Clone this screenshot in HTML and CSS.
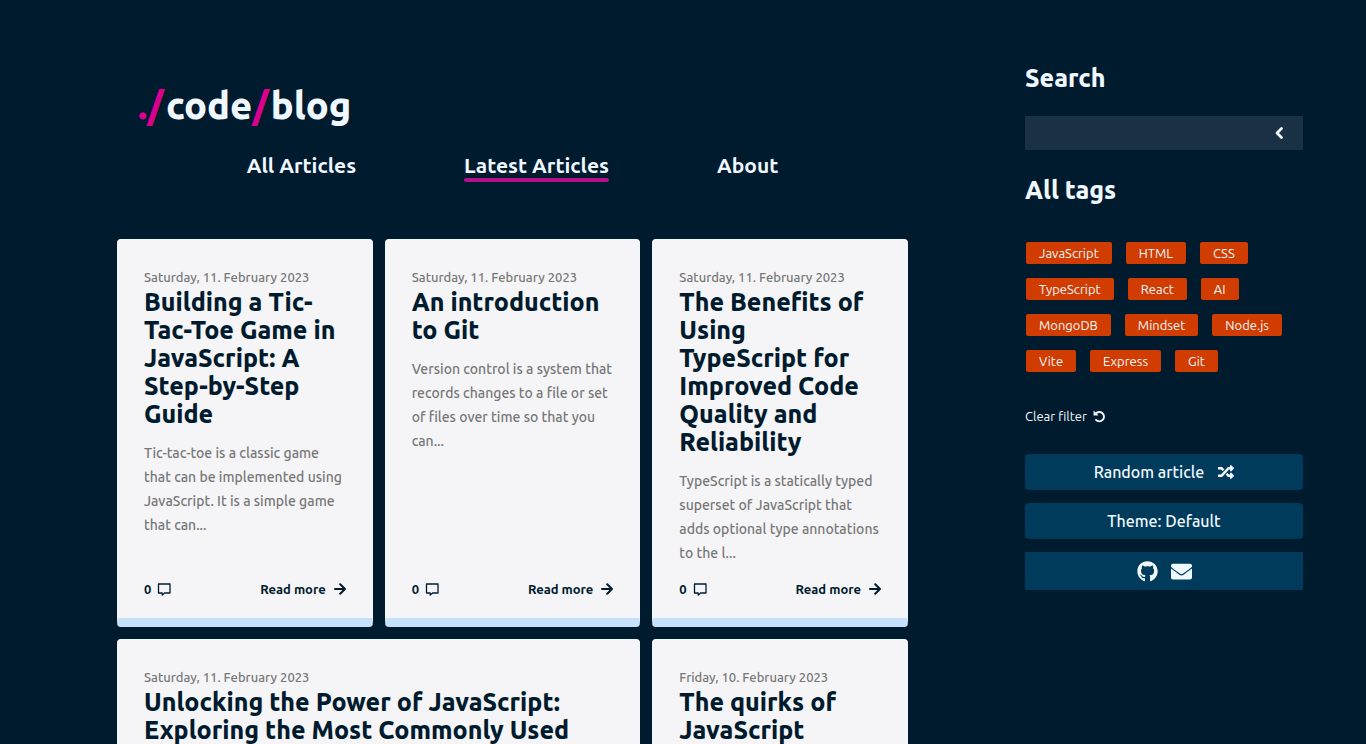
FILE: index.html
```html
<!DOCTYPE html>
<html lang="en">
<head>
<meta charset="utf-8">
<meta name="viewport" content="width=device-width, initial-scale=1">
<title>./code/blog</title>
<link rel="stylesheet" href="styles.css">
</head>
<body>
<svg class="sprite" aria-hidden="true">
  <symbol id="comment" viewBox="0 0 14 13"><path d="M1.500 1h11.500v9H7.600L5.200 12V10H1.500z" fill="none" stroke="currentColor" stroke-width="1.300" stroke-linejoin="round"/></symbol>
  <symbol id="arrow" viewBox="0 0 12 12"><path d="M1 6h10M6.200 1.200 11 6l-4.800 4.800" fill="none" stroke="currentColor" stroke-width="2" stroke-linecap="round" stroke-linejoin="round"/></symbol>
</svg>
<div class="page">
  <main class="main">
    <header class="header">
      <a class="logo" href="#"><span class="accent">./</span>code<span class="accent">/</span>blog</a>
      <nav class="nav">
        <a href="#">All Articles</a>
        <a class="active" href="#">Latest Articles</a>
        <a href="#">About</a>
      </nav>
    </header>
    <section class="cards">
      <article class="card">
        <time class="date">Saturday, 11. February 2023</time>
        <h2 class="title">Building a Tic-Tac-Toe Game in JavaScript: A Step-by-Step Guide</h2>
        <p class="summary">Tic-tac-toe is a classic game that can be implemented using JavaScript. It is a simple game that can...</p>
        <footer class="card-footer"><span class="comments">0 <svg class="i-comment"><use href="#comment"/></svg></span><a class="more" href="#">Read more <svg class="i-arrow"><use href="#arrow"/></svg></a></footer>
      </article>
      <article class="card">
        <time class="date">Saturday, 11. February 2023</time>
        <h2 class="title">An introduction to Git</h2>
        <p class="summary">Version control is a system that records changes to a file or set of files over time so that you can...</p>
        <footer class="card-footer"><span class="comments">0 <svg class="i-comment"><use href="#comment"/></svg></span><a class="more" href="#">Read more <svg class="i-arrow"><use href="#arrow"/></svg></a></footer>
      </article>
      <article class="card">
        <time class="date">Saturday, 11. February 2023</time>
        <h2 class="title">The Benefits of Using TypeScript for Improved Code Quality and Reliability</h2>
        <p class="summary">TypeScript is a statically typed superset of JavaScript that adds optional type annotations to the l...</p>
        <footer class="card-footer"><span class="comments">0 <svg class="i-comment"><use href="#comment"/></svg></span><a class="more" href="#">Read more <svg class="i-arrow"><use href="#arrow"/></svg></a></footer>
      </article>
      <article class="card wide">
        <time class="date">Saturday, 11. February 2023</time>
        <h2 class="title">Unlocking the Power of JavaScript: Exploring the Most Commonly Used</h2>
      </article>
      <article class="card">
        <time class="date">Friday, 10. February 2023</time>
        <h2 class="title">The quirks of JavaScript</h2>
      </article>
    </section>
  </main>
  <aside class="sidebar">
    <h2 class="heading"><label for="search">Search</label></h2>
    <form class="search">
      <input id="search" type="text">
      <button class="search-button" type="button" aria-label="Toggle search"><svg viewBox="0 0 10 14"><path d="M7.500 2.500 3 7l4.500 4.500" fill="none" stroke="currentColor" stroke-width="2.800" stroke-linecap="round" stroke-linejoin="round"/></svg></button>
    </form>
    <h2 class="heading">All tags</h2>
    <div class="tags">
      <button class="tag">JavaScript</button><button class="tag">HTML</button><button class="tag">CSS</button>
      <button class="tag">TypeScript</button><button class="tag">React</button><button class="tag">AI</button>
      <button class="tag">MongoDB</button><button class="tag">Mindset</button><button class="tag">Node.js</button>
      <button class="tag">Vite</button><button class="tag">Express</button><button class="tag">Git</button>
    </div>
    <button class="clear">Clear filter <svg viewBox="0 0 14 14"><path d="M3 4A5 5 0 1 1 3.200 10.600" fill="none" stroke="currentColor" stroke-width="2" stroke-linecap="round"/><path d="M.6.600v5.400H6z" fill="currentColor"/></svg></button>
    <div class="actions">
      <button class="action">Random article <svg class="i-shuffle" viewBox="0 0 512 512"><path fill="currentColor" d="M504.971 359.029c9.373 9.373 9.373 24.569 0 33.941l-80 79.984c-15.010 15.010-40.971 4.490-40.971-16.971V416h-58.785a12.004 12.004 0 0 1-8.773-3.812l-70.556-75.596 53.333-57.143L352 336h32v-39.981c0-21.438 25.943-31.998 40.971-16.971l80 79.981zM12 176h84l52.781 56.551 53.333-57.143-70.556-75.596A11.999 11.999 0 0 0 122.785 96H12c-6.627 0-12 5.373-12 12v56c0 6.627 5.373 12 12 12zm372 0v39.984c0 21.460 25.961 31.980 40.971 16.971l80-79.984c9.373-9.373 9.373-24.569 0-33.941l-80-79.981C409.943 24.021 384 34.582 384 56.019V96h-58.785a12.004 12.004 0 0 0-8.773 3.812L96 336H12c-6.627 0-12 5.373-12 12v56c0 6.627 5.373 12 12 12h110.785c3.326 0 6.503-1.381 8.773-3.812L352 176h32z"/></svg></button>
      <button class="action">Theme: Default</button>
      <div class="social">
        <a href="#" aria-label="GitHub"><svg viewBox="0 0 496 512"><path fill="currentColor" d="M165.900 397.400c0 2-2.300 3.600-5.200 3.600-3.300.3-5.600-1.300-5.600-3.600 0-2 2.300-3.600 5.200-3.600 3-.3 5.600 1.300 5.600 3.600zM244.800 8C106.100 8 0 113.300 0 252c0 110.900 69.800 205.800 169.500 239.200 12.800 2.300 17.300-5.600 17.300-12.100 0-6.200-.3-40.400-.3-61.400 0 0-70 15-84.700-29.800 0 0-11.400-29.100-27.800-36.600 0 0-22.900-15.700 1.600-15.400 0 0 24.900 2 38.600 25.800 21.900 38.600 58.600 27.500 72.900 20.900 2.300-16 8.800-27.100 16-33.700-55.900-6.200-112.300-14.300-112.300-110.500 0-27.500 7.600-41.300 23.600-58.900-2.600-6.500-11.100-33.300 2.600-67.900 20.900-6.500 69 27 69 27 20-5.600 41.500-8.500 62.800-8.500s42.800 2.900 62.800 8.500c0 0 48.100-33.600 69-27 13.700 34.700 5.200 61.400 2.600 67.900 16 17.700 25.800 31.500 25.800 58.900 0 96.500-58.900 104.200-114.800 110.500 9.200 7.900 17 22.900 17 46.400 0 33.700-.3 75.400-.3 83.600 0 6.500 4.600 14.400 17.300 12.100C428.200 457.800 496 362.900 496 252 496 113.300 383.500 8 244.800 8z"/></svg></a>
        <a href="#" aria-label="Email"><svg viewBox="0 0 512 512"><path fill="currentColor" d="M502.300 190.800c3.900-3.100 9.700-.2 9.700 4.700V400c0 26.500-21.500 48-48 48H48c-26.500 0-48-21.500-48-48V195.600c0-5 5.700-7.800 9.700-4.700 22.400 17.400 52.100 39.500 154.100 113.600 21.100 15.400 56.700 47.800 92.200 47.600 35.700.3 72-32.800 92.300-47.600 102-74.100 131.600-96.300 154-113.700zM256 320c23.200.4 56.600-29.200 73.400-41.400 132.700-96.300 142.800-104.700 173.400-128.700 5.800-4.500 9.200-11.500 9.200-18.900v-19c0-26.500-21.500-48-48-48H48c-26.500 0-48 21.500-48 48v19c0 7.400 3.400 14.300 9.200 18.900 30.600 23.900 40.700 32.400 173.400 128.700 16.800 12.200 50.200 41.800 73.400 41.400z"/></svg></a>
      </div>
    </div>
  </aside>
</div>
</body>
</html>
```
FILE: styles.css
```css
* { box-sizing: border-box; }
body {
  margin: 0;
  background: #001b2e;
  color: #f0f8ff;
  font-family: Ubuntu, "Noto Sans", "Open Sans", sans-serif;
}
a { color: inherit; text-decoration: none; }
button { font: inherit; color: inherit; border: 0; cursor: pointer; }
h2, p { margin: 0; }
.sprite { display: none; }
.page {
  display: grid;
  grid-template-columns: 1fr 278px;
  gap: 117px;
  height: 100vh;
  overflow: hidden;
  padding: 0 63px 0 117px;
}
.header { padding: 79px 0 57px; }
.logo {
  display: block;
  margin-left: 21px;
  font-size: 38px;
  font-weight: 800;
  line-height: 52px;
}
.accent { margin-right: 2px; color: #d9008d; }
.nav {
  display: flex;
  justify-content: center;
  gap: 108px;
  margin-top: 21px;
  font-size: 21px;
  font-weight: 600;
  line-height: 26px;
}
.nav a { position: relative; height: 30px; }
.nav .active::after {
  content: "";
  position: absolute;
  right: 0;
  bottom: 0;
  left: 0;
  height: 4px;
  border-radius: 2px;
  background: #b5108a;
}
.cards {
  display: grid;
  grid-template-columns: repeat(3, 1fr);
  gap: 12px;
}
.card {
  display: flex;
  flex-direction: column;
  min-height: 388px;
  padding: 26px 26px 17px;
  border: 1px solid #f0f8ff;
  border-bottom: 9px solid #c5e1fc;
  border-radius: 4px;
  background: #f5f5f7;
  color: #001b2e;
}
.wide { grid-column: span 2; }
.date { color: #777; font-size: 13px; font-weight: 500; line-height: 22px; }
.title { padding-right: 6px; font-size: 25px; font-weight: 800; line-height: 28px; }
.summary { margin-top: 13px; color: #777; font-size: 14px; font-weight: 500; line-height: 24px; }
.card-footer {
  display: flex;
  justify-content: space-between;
  margin-top: auto;
  font-size: 13px;
  font-weight: 600;
  line-height: 24px;
}
.comments { display: flex; align-items: center; gap: 6px; }
.more { display: flex; align-items: center; gap: 8px; }
.i-comment { width: 14px; height: 13px; }
.i-arrow { width: 12px; height: 12px; }
.sidebar { padding-top: 60px; }
.heading { font-size: 25px; font-weight: 800; line-height: 36px; }
.search { display: flex; height: 34px; margin: 20px 0 22px; background: #1a3145; }
.search input {
  flex: 1;
  min-width: 0;
  padding: 0 12px;
  border: 0;
  background: transparent;
  color: inherit;
  font: inherit;
  outline: 0;
}
.search-button { display: flex; align-items: center; padding: 0 19px; background: transparent; }
.search-button svg { width: 10px; height: 14px; }
.tags { display: flex; flex-wrap: wrap; gap: 14px; padding: 34px 2px 0 1px; }
.tag {
  height: 22px;
  padding: 0 13px;
  border-radius: 2px;
  background: #d13c00;
  font-size: 13px;
  line-height: 22px;
}
.clear {
  display: flex;
  align-items: center;
  gap: 6px;
  margin: 34px 0 28px;
  padding: 0;
  background: transparent;
  font-size: 13px;
  line-height: 20px;
}
.clear svg { width: 13px; height: 13px; }
.actions { display: grid; gap: 13px; }
.action, .social {
  display: flex;
  align-items: center;
  justify-content: center;
  gap: 14px;
  height: 36px;
  border-radius: 4px;
  background: #003b5c;
  font-size: 16px;
  font-weight: 500;
}
.i-shuffle { width: 16px; height: 16px; }
.social { height: 38px; border-radius: 0; gap: 13px; }
.social a { display: flex; }
.social svg { width: 21px; height: 21px; }
```
